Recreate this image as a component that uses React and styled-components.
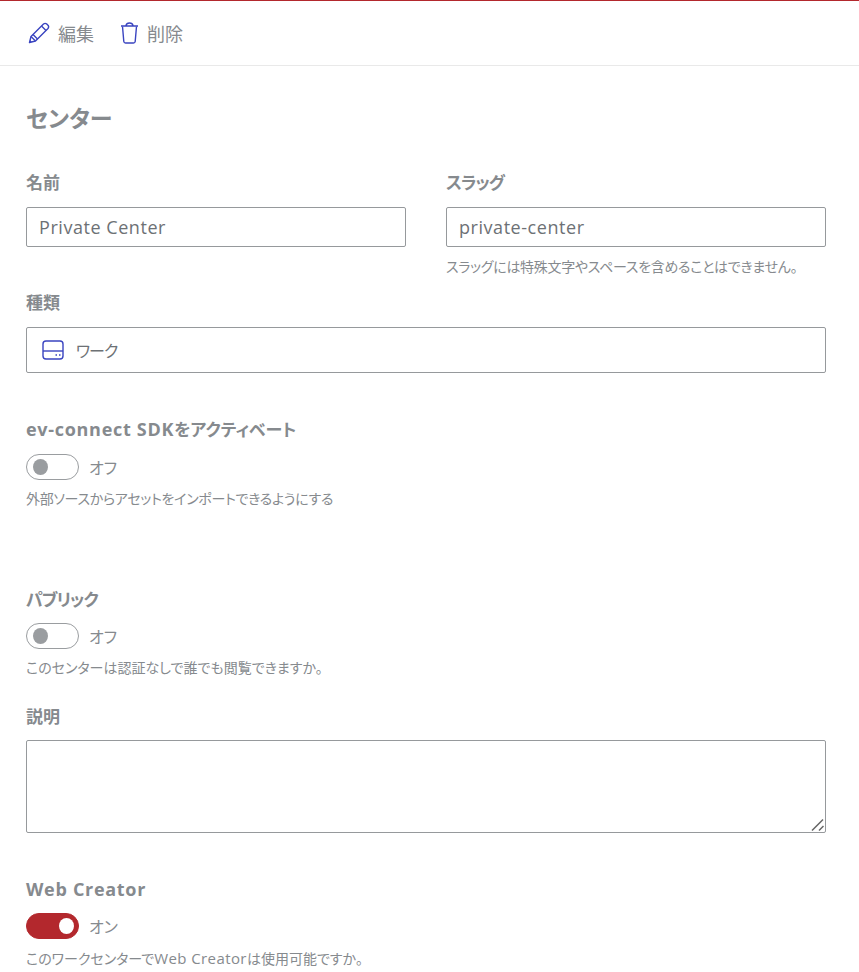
import React from 'react'
import styled, { createGlobalStyle } from 'styled-components'

const GlobalStyle = createGlobalStyle`
    html, body {
        margin:0;
        padding:0;
        background:#fff;
    }
    body {
        font-family:"Open Sans","Noto Sans CJK JP",sans-serif;
        font-feature-settings:"palt";
        color:#868a8e;
    }
`;

function PencilIcon() {
    return (
        <svg width="22" height="22" viewBox="0 0 22 22" fill="none" stroke="#3a44c0" strokeWidth="1.4" strokeLinejoin="round">
            <path d="M1.5 20.5 L3 14.5 L15.5 2 Q17 0.8 18.5 1.8 L20.2 3.5 Q21.2 5 20 6.5 L7.5 19 Z" />
            <path d="M13.5 4 L18 8.5 M3 14.5 L7.5 19 M5 12.5 L9.5 17 M1.9 18.8 L3.2 20.1" />
        </svg>
    )
}

function TrashIcon() {
    return (
        <svg width="19" height="22" viewBox="1 0 18 22" fill="none" stroke="#3a44c0" strokeWidth="1.4" strokeLinejoin="round">
            <path d="M1.5 4 H18.5 M6.5 3.5 Q7 1 10 1 Q13 1 13.5 3.5" />
            <path d="M3 4.5 L4.3 19.5 Q4.5 21 6 21 H14 Q15.5 21 15.7 19.5 L17 4.5" />
        </svg>
    )
}

function DriveIcon() {
    return (
        <svg width="22" height="20" viewBox="0 0 22 20" fill="none" stroke="#3a44c0" strokeWidth="1.4">
            <rect x="1" y="1" width="20" height="18" rx="3" />
            <path d="M1 11 H21" />
            <path d="M13.5 15 H15 M17 15 H18.5" />
        </svg>
    )
}

function ResizeGrip() {
    return (
        <Grip width="13" height="13" viewBox="0 0 13 13" stroke="#666" strokeWidth="1.5">
            <path d="M1 12.5 L12 1.5 M8 12.5 L12.5 8" />
        </Grip>
    )
}

function App() {
    return (
        <Page>
            <GlobalStyle />
            <TopBar>
                <Action><PencilIcon /><span>編集</span></Action>
                <Action><TrashIcon /><span>削除</span></Action>
            </TopBar>
            <Content>
                <Title>センター</Title>
                <TwoColumns>
                    <Field>
                        <Label>名前</Label>
                        <Input defaultValue="Private Center" />
                    </Field>
                    <Field>
                        <KanaLabel>スラッグ</KanaLabel>
                        <Input defaultValue="private-center" />
                        <SlugHelp $tight>スラッグには特殊文字やスペースを含めることはできません。</SlugHelp>
                    </Field>
                </TwoColumns>
                <KindLabel>種類</KindLabel>
                <SelectBox><DriveIcon /><SelectText>ワーク</SelectText></SelectBox>
                <SdkLabel><Latin>ev-connect SDK</Latin>をアクティベート</SdkLabel>
                <ToggleRow>
                    <Toggle />
                    <ToggleText>オフ</ToggleText>
                </ToggleRow>
                <Help $tight>外部ソースからアセットをインポートできるようにする</Help>
                <PublicLabel>パブリック</PublicLabel>
                <ToggleRow>
                    <Toggle />
                    <ToggleText>オフ</ToggleText>
                </ToggleRow>
                <Help>このセンターは認証なしで誰でも閲覧できますか。</Help>
                <DescriptionLabel>説明</DescriptionLabel>
                <TextAreaWrap>
                    <TextArea />
                    <ResizeGrip />
                </TextAreaWrap>
                <CreatorLabel><Latin>Web Creator</Latin></CreatorLabel>
                <ToggleRow>
                    <Toggle $on />
                    <ToggleText>オン</ToggleText>
                </ToggleRow>
                <Help>このワークセンターで<HelpLatin>Web Creator</HelpLatin>は使用可能ですか。</Help>
            </Content>
        </Page>
    )
}

const Page = styled.div`
    width:859px;
    height:972px;
    overflow:hidden;
    border-top:1px solid #b3282d;
    box-sizing:border-box;
`;
const TopBar = styled.div`
    display:flex;
    align-items:center;
    box-sizing:border-box;
    gap:26px;
    height:65px;
    padding:0 27px 0 28px;
    border-bottom:1px solid #e9e9e9;
`;
const Action = styled.div`
    display:flex;
    align-items:center;
    gap:8px;
    font-size:18px;
    color:#868a8e;
`;
const Content = styled.div`
    display:flex;
    flex-direction:column;
    padding:0 33px 0 26px;
`;
const Title = styled.h1`
    margin:35px 0 0;
    font-size:23px;
    line-height:34px;
    font-weight:700;
    color:#868a8e;
`;
const TwoColumns = styled.div`
    display:grid;
    grid-template-columns:380px 380px;
    gap:40px;
    margin-top:36px;
`;
const Field = styled.div`
    display:flex;
    flex-direction:column;
`;
const Label = styled.label`
    font-size:17px;
    line-height:24px;
    font-weight:700;
    color:#868a8e;
    margin-bottom:12px;
`;
const KanaLabel = styled(Label)`
    letter-spacing:-1px;
`;
const Latin = styled.span`
    font-size:18px;
    letter-spacing:0.7px;
`;
const KindLabel = styled(Label)`
    margin-top:14px;
`;
const SdkLabel = styled(Label)`
    margin:44px 0 12px;
`;
const PublicLabel = styled(KanaLabel)`
    margin:79px 0 11px;
`;
const DescriptionLabel = styled(Label)`
    margin:27px 0 11px;
`;
const CreatorLabel = styled(Label)`
    margin:44px 0 11px;
`;
const Input = styled.input`
    box-sizing:border-box;
    width:100%;
    height:40px;
    padding:0 12px;
    border:1px solid #96999c;
    border-radius:2px;
    font-family:inherit;
    font-size:18px;
    letter-spacing:0.55px;
    color:#6d7175;
    outline:none;
`;
const SelectBox = styled.div`
    display:flex;
    align-items:center;
    gap:12px;
    box-sizing:border-box;
    width:800px;
    height:46px;
    padding:0 15px;
    border:1px solid #96999c;
    border-radius:2px;
    font-size:16px;
    color:#6d7175;
`;
const SelectText = styled.span`
    letter-spacing:-1px;
`;
const Help = styled.p`
    margin:9px 0 0;
    font-size:14px;
    line-height:20px;
    letter-spacing:${(props) => (props.$tight ? '-0.3px' : '0')};
    color:#868a8e;
`;
const HelpLatin = styled.span`
    font-size:15px;
    letter-spacing:0.4px;
`;
const SlugHelp = styled(Help)`
    margin-top:10px;
`;
const ToggleRow = styled.div`
    display:flex;
    align-items:center;
    gap:10px;
    height:26px;
`;
const Toggle = styled.span`
    position:relative;
    box-sizing:border-box;
    width:53px;
    height:26px;
    border-radius:13px;
    border:1px solid ${(props) => (props.$on ? '#b3282d' : '#9a9da0')};
    background:${(props) => (props.$on ? '#b3282d' : '#fff')};
    &::after {
        content:"";
        position:absolute;
        top:4px;
        left:${(props) => (props.$on ? '32px' : '6px')};
        width:15px;
        height:16px;
        border-radius:50%;
        background:${(props) => (props.$on ? '#fff' : '#9a9da0')};
    }
`;
const ToggleText = styled.span`
    font-size:16px;
    color:#868a8e;
`;
const TextAreaWrap = styled.div`
    position:relative;
    width:800px;
    height:93px;
`;
const TextArea = styled.textarea`
    display:block;
    box-sizing:border-box;
    width:100%;
    height:100%;
    border:1px solid #96999c;
    border-radius:2px;
    outline:none;
    resize:none;
    font-family:inherit;
`;
const Grip = styled.svg`
    position:absolute;
    right:2px;
    bottom:2px;
`;

export default App;
